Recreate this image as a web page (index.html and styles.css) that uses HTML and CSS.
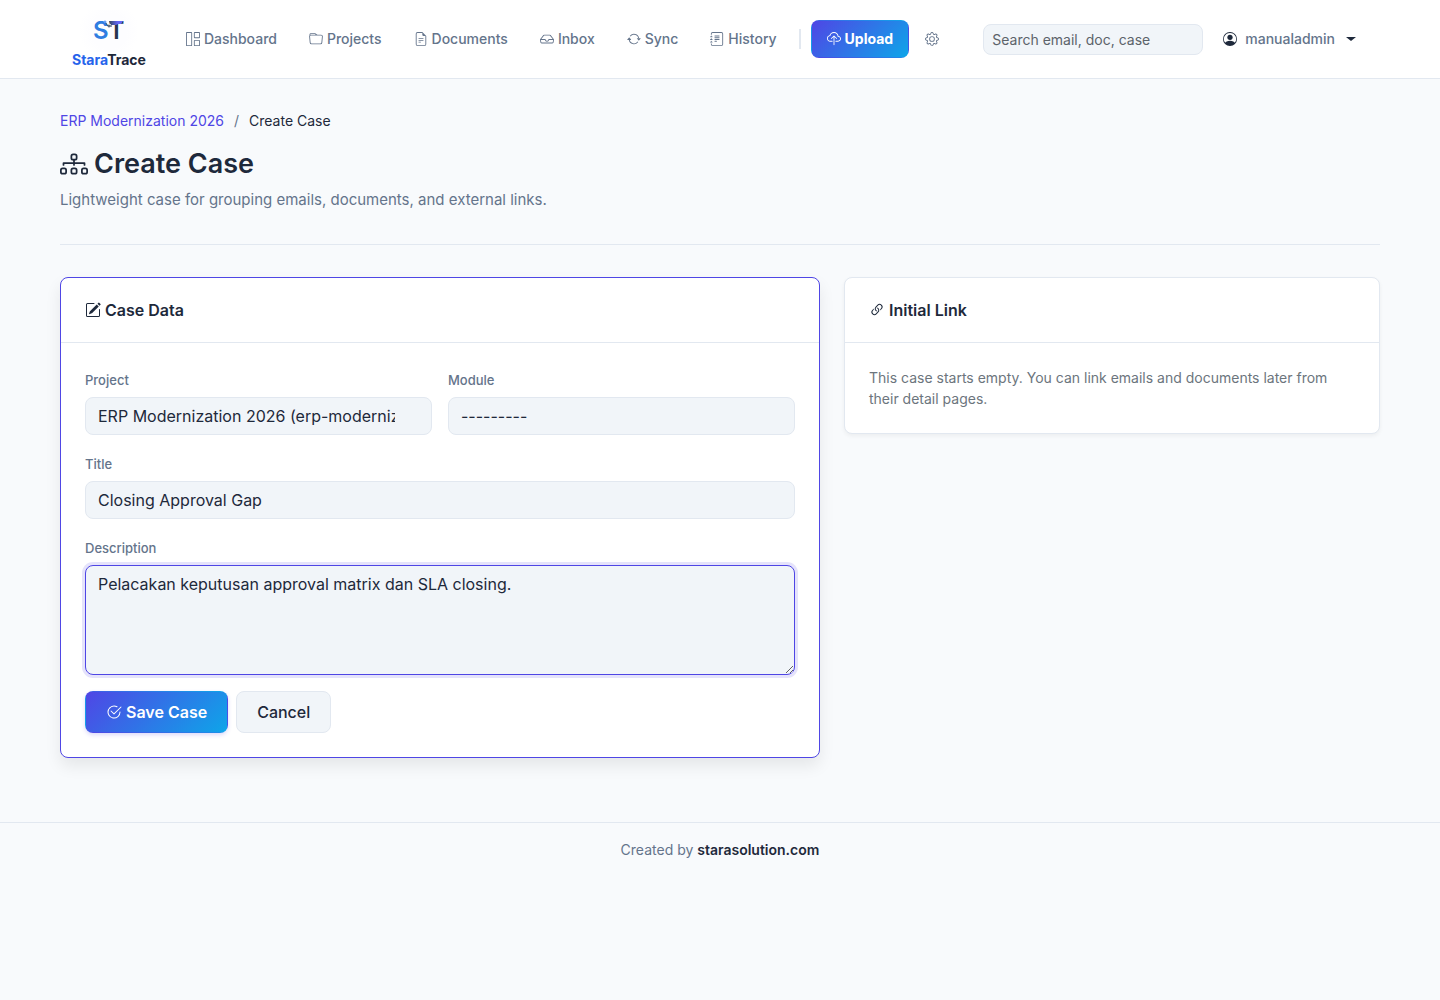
FILE: index.html
```html
<!DOCTYPE html>
<html lang="en">
<head>
    <meta charset="UTF-8">
    <meta name="viewport" content="width=device-width, initial-scale=1.0">
    <title>Create Case - StaraTrace</title>
    <link rel="stylesheet" href="styles.css">
</head>
<body>
    <header class="navbar">
        <div class="container navbar-inner">
            <a class="brand" href="#">
                <svg class="brand-logo" viewBox="0 2 60 42" aria-hidden="true">
                    <defs>
                        <radialGradient id="logoGlow">
                            <stop offset="0.6" stop-color="#fdfdff"/>
                            <stop offset="1" stop-color="#ffffff"/>
                        </radialGradient>
                        <linearGradient id="logoBar" x1="0" x2="1">
                            <stop offset="0" stop-color="#33475f"/>
                            <stop offset="0.6" stop-color="#6366f1"/>
                        </linearGradient>
                    </defs>
                    <circle cx="30" cy="23" r="30" fill="url(#logoGlow)"/>
                    <text class="logo-text" x="14" y="31">S<tspan class="logo-t">T</tspan></text>
                    <path d="M30 13h14l-2 3h-3l-2 1h-5z" fill="url(#logoBar)"/>
                    <path d="M26 14l3 4h4" fill="none" stroke="#33475f"/>
                    <circle cx="26" cy="14" r="1" fill="#fff" stroke="#3b82f6"/>
                    <circle cx="30" cy="18" r="1" fill="#fff" stroke="#33475f"/>
                </svg>
                <span class="brand-name"><span class="brand-accent">Stara</span>Trace</span>
            </a>

            <nav class="nav">
                <a class="nav-link" href="#">
                    <svg class="icon" viewBox="0 0 16 16"><path d="M6 1H1v14h5zm9 0h-5v5h5zm0 9v5h-5v-5zM0 1a1 1 0 0 1 1-1h5a1 1 0 0 1 1 1v14a1 1 0 0 1-1 1H1a1 1 0 0 1-1-1zm9 0a1 1 0 0 1 1-1h5a1 1 0 0 1 1 1v5a1 1 0 0 1-1 1h-5a1 1 0 0 1-1-1zm1 8a1 1 0 0 0-1 1v5a1 1 0 0 0 1 1h5a1 1 0 0 0 1-1v-5a1 1 0 0 0-1-1z"/></svg>
                    Dashboard
                </a>
                <a class="nav-link" href="#">
                    <svg class="icon" viewBox="0 0 16 16"><path d="M.54 3.87.5 3a2 2 0 0 1 2-2h3.672a2 2 0 0 1 1.414.586l.828.828A2 2 0 0 0 9.828 3h3.982a2 2 0 0 1 1.992 2.181l-.637 7A2 2 0 0 1 13.174 14H2.826a2 2 0 0 1-1.991-1.819l-.637-7a2 2 0 0 1 .342-1.31zM2.19 4a1 1 0 0 0-.996 1.09l.637 7a1 1 0 0 0 .995.91h10.348a1 1 0 0 0 .995-.91l.637-7A1 1 0 0 0 13.81 4zm4.69-1.707A1 1 0 0 0 6.172 2H2.5a1 1 0 0 0-1 .981l.006.139q.323-.119.684-.12h5.396z"/></svg>
                    Projects
                </a>
                <a class="nav-link" href="#">
                    <svg class="icon" viewBox="0 0 16 16"><path d="M5.5 7a.5.5 0 0 0 0 1h5a.5.5 0 0 0 0-1zM5 9.5a.5.5 0 0 1 .5-.5h5a.5.5 0 0 1 0 1h-5a.5.5 0 0 1-.5-.5m0 2a.5.5 0 0 1 .5-.5h2a.5.5 0 0 1 0 1h-2a.5.5 0 0 1-.5-.5"/><path d="M9.5 0H4a2 2 0 0 0-2 2v12a2 2 0 0 0 2 2h8a2 2 0 0 0 2-2V4.5zm0 1v2A1.5 1.5 0 0 0 11 4.5h2V14a1 1 0 0 1-1 1H4a1 1 0 0 1-1-1V2a1 1 0 0 1 1-1z"/></svg>
                    Documents
                </a>
                <a class="nav-link" href="#">
                    <svg class="icon" viewBox="0 0 16 16"><path d="M4.98 4a.5.5 0 0 0-.39.188L1.54 8H6a.5.5 0 0 1 .5.5 1.5 1.5 0 1 0 3 0A.5.5 0 0 1 10 8h4.46l-3.05-3.812A.5.5 0 0 0 11.02 4zm9.954 5H10.45a2.5 2.5 0 0 1-4.9 0H1.066l.32 2.562a.5.5 0 0 0 .497.438h12.234a.5.5 0 0 0 .496-.438zM3.809 3.563A1.5 1.5 0 0 1 4.981 3h6.038a1.5 1.5 0 0 1 1.172.563l3.7 4.625a.5.5 0 0 1 .105.374l-.39 3.124A1.5 1.5 0 0 1 14.117 13H1.883a1.5 1.5 0 0 1-1.489-1.314l-.39-3.124a.5.5 0 0 1 .106-.374z"/></svg>
                    Inbox
                </a>
                <a class="nav-link" href="#">
                    <svg class="icon" viewBox="0 0 16 16"><path d="M11.534 7h3.932a.25.25 0 0 1 .192.41l-1.966 2.36a.25.25 0 0 1-.384 0l-1.966-2.36a.25.25 0 0 1 .192-.41m-11 2h3.932a.25.25 0 0 0 .192-.41L2.692 6.23a.25.25 0 0 0-.384 0L.342 8.59A.25.25 0 0 0 .534 9"/><path d="M8 3c-1.552 0-2.94.707-3.857 1.818a.5.5 0 1 1-.771-.636A6.002 6.002 0 0 1 13.917 7H12.9A5 5 0 0 0 8 3M3.1 9a5.002 5.002 0 0 0 8.757 2.182.5.5 0 1 1 .771.636A6.002 6.002 0 0 1 2.083 9z"/></svg>
                    Sync
                </a>
                <a class="nav-link" href="#">
                    <svg class="icon" viewBox="0 0 16 16"><path d="M5 10.5a.5.5 0 0 1 .5-.5h2a.5.5 0 0 1 0 1h-2a.5.5 0 0 1-.5-.5m0-2a.5.5 0 0 1 .5-.5h5a.5.5 0 0 1 0 1h-5a.5.5 0 0 1-.5-.5m0-2a.5.5 0 0 1 .5-.5h5a.5.5 0 0 1 0 1h-5a.5.5 0 0 1-.5-.5m0-2a.5.5 0 0 1 .5-.5h5a.5.5 0 0 1 0 1h-5a.5.5 0 0 1-.5-.5"/><path d="M3 0h10a2 2 0 0 1 2 2v12a2 2 0 0 1-2 2H3a2 2 0 0 1-2-2v-1h1v1a1 1 0 0 0 1 1h10a1 1 0 0 0 1-1V2a1 1 0 0 0-1-1H3a1 1 0 0 0-1 1v1H1V2a2 2 0 0 1 2-2"/><path d="M1 5v-.5a.5.5 0 0 1 1 0V5h.5a.5.5 0 0 1 0 1h-2a.5.5 0 0 1 0-1zm0 3v-.5a.5.5 0 0 1 1 0V8h.5a.5.5 0 0 1 0 1h-2a.5.5 0 0 1 0-1zm0 3v-.5a.5.5 0 0 1 1 0v.5h.5a.5.5 0 0 1 0 1h-2a.5.5 0 0 1 0-1z"/></svg>
                    History
                </a>
            </nav>

            <span class="nav-divider"></span>

            <a class="btn btn-primary btn-upload" href="#">
                <svg class="icon" viewBox="0 0 16 16"><path d="M4.406 1.342A5.53 5.53 0 0 1 8 0c2.69 0 4.923 2 5.166 4.579C14.758 4.804 16 6.137 16 7.773 16 9.569 14.502 11 12.687 11H10a.5.5 0 0 1 0-1h2.688C13.979 10 15 8.988 15 7.773c0-1.216-1.02-2.228-2.313-2.228h-.5v-.5C12.188 2.825 10.328 1 8 1a4.53 4.53 0 0 0-2.941 1.1c-.757.652-1.153 1.438-1.153 2.055v.448l-.445.049C2.064 4.805 1 5.952 1 7.318 1 8.785 2.23 10 3.781 10H6a.5.5 0 0 1 0 1H3.781C1.708 11 0 9.366 0 7.318c0-1.763 1.266-3.223 2.942-3.593.143-.863.698-1.723 1.464-2.383"/><path d="M7.646 4.146a.5.5 0 0 1 .708 0l3 3a.5.5 0 0 1-.708.708L8.5 5.707V14.5a.5.5 0 0 1-1 0V5.707L5.354 7.854a.5.5 0 1 1-.708-.708z"/></svg>
                Upload
            </a>
            <a class="nav-link nav-settings" href="#" aria-label="Settings">
                <svg class="icon" viewBox="0 0 16 16"><path d="M8 4.754a3.246 3.246 0 1 0 0 6.492 3.246 3.246 0 0 0 0-6.492M5.754 8a2.246 2.246 0 1 1 4.492 0 2.246 2.246 0 0 1-4.492 0"/><path d="M9.796 1.343c-.527-1.79-3.065-1.79-3.592 0l-.094.319a.873.873 0 0 1-1.255.52l-.292-.16c-1.64-.892-3.433.902-2.54 2.541l.159.292a.873.873 0 0 1-.52 1.255l-.319.094c-1.79.527-1.79 3.065 0 3.592l.319.094a.873.873 0 0 1 .52 1.255l-.16.292c-.892 1.64.901 3.434 2.541 2.54l.292-.159a.873.873 0 0 1 1.255.52l.094.319c.527 1.79 3.065 1.79 3.592 0l.094-.319a.873.873 0 0 1 1.255-.52l.292.16c1.64.893 3.434-.902 2.54-2.541l-.159-.292a.873.873 0 0 1 .52-1.255l.319-.094c1.79-.527 1.79-3.065 0-3.592l-.319-.094a.873.873 0 0 1-.52-1.255l.16-.292c.893-1.64-.902-3.433-2.541-2.54l-.292.159a.873.873 0 0 1-1.255-.52zm-2.633.283c.246-.835 1.428-.835 1.674 0l.094.319a1.873 1.873 0 0 0 2.693 1.115l.291-.16c.764-.415 1.6.42 1.184 1.185l-.159.292a1.873 1.873 0 0 0 1.116 2.692l.318.094c.835.246.835 1.428 0 1.674l-.319.094a1.873 1.873 0 0 0-1.115 2.693l.16.291c.415.764-.42 1.6-1.185 1.184l-.291-.159a1.873 1.873 0 0 0-2.693 1.116l-.094.318c-.246.835-1.428.835-1.674 0l-.094-.319a1.873 1.873 0 0 0-2.692-1.115l-.292.16c-.764.415-1.6-.42-1.184-1.185l.159-.291A1.873 1.873 0 0 0 1.945 8.93l-.319-.094c-.835-.246-.835-1.428 0-1.674l.319-.094A1.873 1.873 0 0 0 3.06 4.377l-.16-.292c-.415-.764.42-1.6 1.185-1.184l.292.159a1.873 1.873 0 0 0 2.692-1.115z"/></svg>
            </a>

            <div class="navbar-end">
                <form class="search" role="search">
                    <input class="form-control form-control-sm" type="search" placeholder="Search email, doc, case" aria-label="Search">
                </form>
                <button class="user-menu" type="button">
                    <svg class="icon" viewBox="0 0 16 16"><path d="M11 6a3 3 0 1 1-6 0 3 3 0 0 1 6 0"/><path fill-rule="evenodd" d="M0 8a8 8 0 1 1 16 0A8 8 0 0 1 0 8m8-7a7 7 0 0 0-5.468 11.37C3.242 11.226 4.805 10 8 10s4.757 1.225 5.468 2.37A7 7 0 0 0 8 1"/></svg>
                    <span class="user-name">manualadmin</span>
                    <span class="caret"></span>
                </button>
            </div>
        </div>
    </header>

    <main class="container main">
        <nav class="breadcrumb" aria-label="Breadcrumb">
            <a href="#">ERP Modernization 2026</a>
            <span class="breadcrumb-sep">/</span>
            <span>Create Case</span>
        </nav>

        <div class="page-header">
            <h1>
                <svg class="icon" viewBox="0 0 16 16"><path fill-rule="evenodd" d="M6 3.5A1.5 1.5 0 0 1 7.5 2h1A1.5 1.5 0 0 1 10 3.5v1A1.5 1.5 0 0 1 8.5 6v1H14a.5.5 0 0 1 .5.5v1a.5.5 0 0 1-1 0V8h-5v.5a.5.5 0 0 1-1 0V8h-5v.5a.5.5 0 0 1-1 0v-1A.5.5 0 0 1 2 7h5.5V6A1.5 1.5 0 0 1 6 4.5zM8.5 5a.5.5 0 0 0 .5-.5v-1a.5.5 0 0 0-.5-.5h-1a.5.5 0 0 0-.5.5v1a.5.5 0 0 0 .5.5zM0 11.5A1.5 1.5 0 0 1 1.5 10h1A1.5 1.5 0 0 1 4 11.5v1A1.5 1.5 0 0 1 2.5 14h-1A1.5 1.5 0 0 1 0 12.5zm1.5-.5a.5.5 0 0 0-.5.5v1a.5.5 0 0 0 .5.5h1a.5.5 0 0 0 .5-.5v-1a.5.5 0 0 0-.5-.5zm4.5.5A1.5 1.5 0 0 1 7.5 10h1a1.5 1.5 0 0 1 1.5 1.5v1A1.5 1.5 0 0 1 8.5 14h-1A1.5 1.5 0 0 1 6 12.5zm1.5-.5a.5.5 0 0 0-.5.5v1a.5.5 0 0 0 .5.5h1a.5.5 0 0 0 .5-.5v-1a.5.5 0 0 0-.5-.5zm4.5.5a1.5 1.5 0 0 1 1.5-1.5h1a1.5 1.5 0 0 1 1.5 1.5v1a1.5 1.5 0 0 1-1.5 1.5h-1a1.5 1.5 0 0 1-1.5-1.5zm1.5-.5a.5.5 0 0 0-.5.5v1a.5.5 0 0 0 .5.5h1a.5.5 0 0 0 .5-.5v-1a.5.5 0 0 0-.5-.5z"/></svg>
                Create Case
            </h1>
            <p>Lightweight case for grouping emails, documents, and external links.</p>
        </div>

        <div class="grid">
            <section class="card card-active">
                <h2 class="card-header">
                    <svg class="icon" viewBox="0 0 16 16"><path d="M15.502 1.94a.5.5 0 0 1 0 .706L14.459 3.69l-2-2L13.502.646a.5.5 0 0 1 .707 0l1.293 1.293zm-1.75 2.456-2-2L4.939 9.21a.5.5 0 0 0-.121.196l-.805 2.414a.25.25 0 0 0 .316.316l2.414-.805a.5.5 0 0 0 .196-.12l6.813-6.814z"/><path fill-rule="evenodd" d="M1 13.5A1.5 1.5 0 0 0 2.5 15h11a1.5 1.5 0 0 0 1.5-1.5v-6a.5.5 0 0 0-1 0v6a.5.5 0 0 1-.5.5h-11a.5.5 0 0 1-.5-.5v-11a.5.5 0 0 1 .5-.5H9a.5.5 0 0 0 0-1H2.5A1.5 1.5 0 0 0 1 2.5z"/></svg>
                    Case Data
                </h2>
                <form class="card-body case-form">
                    <div class="form-row">
                        <div class="field">
                            <label for="project">Project</label>
                            <select class="form-control form-select" id="project">
                                <option selected>ERP Modernization 2026 (erp-modernization-2026)</option>
                            </select>
                        </div>
                        <div class="field">
                            <label for="module">Module</label>
                            <select class="form-control form-select" id="module">
                                <option selected>---------</option>
                            </select>
                        </div>
                    </div>
                    <div class="field">
                        <label for="title">Title</label>
                        <input class="form-control" type="text" id="title" value="Closing Approval Gap">
                    </div>
                    <div class="field">
                        <label for="description">Description</label>
                        <textarea class="form-control is-focused" id="description" rows="4">Pelacakan keputusan approval matrix dan SLA closing.</textarea>
                    </div>
                    <div class="form-actions">
                        <button class="btn btn-primary btn-save" type="submit">
                            <svg class="icon" viewBox="0 0 16 16"><path d="M2.5 8a5.5 5.5 0 0 1 8.25-4.764.5.5 0 0 0 .5-.866A6.5 6.5 0 1 0 14.5 8a.5.5 0 0 0-1 0 5.5 5.5 0 1 1-11 0"/><path d="M15.354 3.354a.5.5 0 0 0-.708-.708L8 9.293 5.354 6.646a.5.5 0 1 0-.708.708l3 3a.5.5 0 0 0 .708 0z"/></svg>
                            Save Case
                        </button>
                        <a class="btn btn-secondary" href="#">Cancel</a>
                    </div>
                </form>
            </section>

            <aside class="card">
                <h2 class="card-header">
                    <svg class="icon" viewBox="0 0 16 16"><path d="M4.715 6.542 3.343 7.914a3 3 0 1 0 4.243 4.243l1.828-1.829A3 3 0 0 0 8.586 5.5L8 6.086a1 1 0 0 0-.154.199 2 2 0 0 1 .861 3.337L6.88 11.45a2 2 0 1 1-2.83-2.83l.793-.792a4 4 0 0 1-.128-1.287z"/><path d="M6.586 4.672A3 3 0 0 0 7.414 9.5l.775-.776a2 2 0 0 1-.896-3.346L9.12 3.55a2 2 0 1 1 2.83 2.83l-.793.792c.112.42.155.855.128 1.287l1.372-1.372a3 3 0 1 0-4.243-4.243z"/></svg>
                    Initial Link
                </h2>
                <div class="card-body">
                    <p class="card-note">This case starts empty. You can link emails and documents later from their detail pages.</p>
                </div>
            </aside>
        </div>
    </main>

    <footer class="footer">
        Created by <a href="#">starasolution.com</a>
    </footer>
</body>
</html>
```
FILE: styles.css
```css
:root {
    --primary: #4f46e5;
    --accent: #0ea5e9;
    --text: #1e293b;
    --muted: #64748b;
    --border: #e2e8f0;
    --surface: #f1f5f9;
    --bg: #f8fafc;
}

* {
    box-sizing: border-box;
}

body {
    margin: 0;
    background: var(--bg);
    color: var(--text);
    font-family: Inter, "Liberation Sans", sans-serif;
    font-size: 16px;
    line-height: 24px;
}

a {
    color: inherit;
    text-decoration: none;
}

h1,
h2,
p {
    margin: 0;
}

input,
select,
textarea,
button {
    font: inherit;
}

.container {
    max-width: 1400px;
    margin: 0 auto;
    padding: 0 40px;
}

.icon {
    width: 1em;
    height: 1em;
    flex: none;
    fill: currentColor;
}

/* Navbar */
.navbar {
    background: #fff;
    border-bottom: 1px solid var(--border);
}

.navbar-inner {
    display: flex;
    align-items: center;
    height: 78px;
}

.brand {
    display: flex;
    flex-direction: column;
    align-items: center;
    margin: 0 24px 0 12px;
}

.brand-logo {
    width: 60px;
    height: 42px;
}

.logo-text {
    font-size: 24px;
    font-weight: 600;
    fill: #2f7de1;
}

.logo-t {
    fill: #263650;
}

.brand-name {
    font-size: 14px;
    font-weight: 700;
    line-height: 16px;
}

.brand-accent {
    color: #2563eb;
}

.nav {
    display: flex;
}

.nav-link {
    display: flex;
    align-items: center;
    gap: 4px;
    padding: 8px 16px;
    color: var(--muted);
    font-size: 14px;
    font-weight: 500;
}

.nav-divider {
    width: 2px;
    height: 20px;
    margin: 0 10px 0 6px;
    background: var(--border);
}

.navbar-end {
    display: flex;
    align-items: center;
    gap: 20px;
    margin-left: auto;
    padding-right: 24px;
}

.search {
    width: 220px;
}

.user-menu {
    display: flex;
    align-items: center;
    gap: 8px;
    padding: 0;
    border: 0;
    background: none;
    color: var(--text);
    font-size: 14px;
}

.user-name {
    color: var(--muted);
    font-weight: 500;
}

.caret {
    margin-left: 3px;
    border: 5px solid transparent;
    border-top: 4px solid currentColor;
    border-bottom: 0;
}

/* Buttons */
.btn {
    display: inline-flex;
    align-items: center;
    gap: 4px;
    padding: 8px 20px;
    border: 1px solid transparent;
    border-radius: 8px;
    font-weight: 500;
    cursor: pointer;
}

.btn-primary {
    background: linear-gradient(135deg, var(--primary), var(--accent));
    color: #fff;
    font-weight: 600;
}

.btn-upload {
    padding: 6px 15px;
    font-size: 14px;
    font-weight: 700;
}

.btn-save {
    box-shadow: 0 2px 4px rgba(79, 70, 229, 0.2);
}

.btn-secondary {
    background: var(--surface);
    border-color: var(--border);
}

/* Page header */
.main {
    padding-top: 32px;
    padding-bottom: 64px;
}

.breadcrumb {
    display: flex;
    gap: 10px;
    margin-bottom: 16px;
    font-size: 14px;
    line-height: 20px;
}

.breadcrumb a {
    color: var(--primary);
}

.breadcrumb-sep {
    color: var(--muted);
}

.page-header {
    margin-bottom: 32px;
    padding-bottom: 32px;
    border-bottom: 1px solid var(--border);
}

.page-header h1 {
    display: flex;
    align-items: center;
    gap: 6px;
    margin-bottom: 8px;
    font-size: 27px;
    font-weight: 600;
    line-height: 33px;
}

.page-header .icon {
    width: 28px;
    height: 28px;
}

.page-header p {
    color: var(--muted);
    font-size: 15px;
}

/* Cards */
.grid {
    display: grid;
    grid-template-columns: repeat(12, 1fr);
    gap: 24px;
    align-items: start;
}

.card {
    grid-column: span 5;
    background: #fff;
    border: 1px solid var(--border);
    border-radius: 8px;
    box-shadow: 0 2px 4px rgba(0, 0, 0, 0.05);
}

.card-active {
    grid-column: span 7;
    border-color: var(--primary);
    box-shadow: 0 8px 16px rgba(0, 0, 0, 0.08);
}

.card-header {
    display: flex;
    align-items: center;
    gap: 4px;
    padding: 20px 24px;
    border-bottom: 1px solid var(--border);
    font-size: 16px;
    font-weight: 600;
    line-height: 24px;
}

.card-body {
    padding: 24px;
}

.card-note {
    color: #6c757d;
    font-size: 14px;
    line-height: 21px;
}

/* Form */
.case-form {
    display: flex;
    flex-direction: column;
    gap: 16px;
}

.form-row {
    display: grid;
    grid-template-columns: 1fr 1fr;
    gap: 16px;
}

.field {
    display: flex;
    flex-direction: column;
    gap: 4px;
    min-width: 0;
}

.field label {
    color: var(--muted);
    font-size: 13px;
    font-weight: 500;
    line-height: 26px;
}

.form-control {
    width: 100%;
    padding: 6px 12px;
    background: var(--surface);
    border: 1px solid var(--border);
    border-radius: 8px;
    color: var(--text);
    line-height: 24px;
    outline: none;
    appearance: none;
}

.form-control:focus,
.form-control.is-focused {
    border-color: var(--primary);
    box-shadow: 0 0 0 3px rgba(79, 70, 229, 0.15);
}

.form-control-sm {
    display: block;
    padding: 4px 8px;
    font-size: 14px;
    line-height: 21px;
}

.form-control-sm::placeholder {
    color: #5c636a;
}

.form-select {
    padding-right: 36px;
}

textarea.form-control {
    resize: vertical;
}

.form-actions {
    display: flex;
    gap: 8px;
}

/* Footer */
.footer {
    padding: 16px;
    border-top: 1px solid var(--border);
    color: var(--muted);
    font-size: 14px;
    line-height: 22px;
    text-align: center;
}

.footer a {
    color: var(--text);
    font-weight: 600;
}

@media (max-width: 992px) {
    .navbar-inner {
        flex-wrap: wrap;
        height: auto;
    }

    .nav {
        flex-wrap: wrap;
    }

    .card,
    .card-active {
        grid-column: span 12;
    }
}
```
